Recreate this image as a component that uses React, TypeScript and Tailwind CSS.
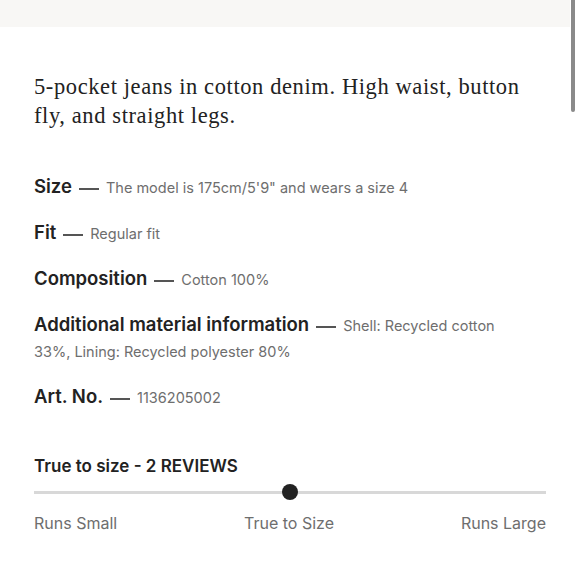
export default function App() {
  const rows: { label: string; value: string }[] = [
    { label: "Size", value: "The model is 175cm/5'9\" and wears a size 4" },
    { label: "Fit", value: "Regular fit" },
    { label: "Composition", value: "Cotton 100%" },
    { label: "Additional material information", value: "Shell: Recycled cotton 33%, Lining: Recycled polyester 80%" },
    { label: "Art. No.", value: "1136205002" },
  ];
  return (
    <div className="relative w-[580px] h-[580px] bg-white overflow-hidden">
      <div className="h-[27px] w-[570px] bg-[#f8f7f5]" />
      <div className="absolute right-[5px] top-0 w-[4px] h-[112px] bg-[#8a8a8a] rounded-b-sm" />
      <div className="px-[34px] pt-[45px]">
        <p className="font-['Liberation_Serif',serif] text-[22.5px] tracking-[0.6px] leading-[29px] text-[#222] w-[510px]">
          5-pocket jeans in cotton denim. High waist, button fly, and straight legs.
        </p>
        <div className="mt-[43px] flex flex-col gap-[18px] font-['Inter',sans-serif]">
          {rows.map((r) => (
            <p key={r.label} className="leading-[26px] text-[14.5px] text-[#6e6e6e] w-[485px]">
              <span className="text-[18.5px] font-semibold text-[#222]">{r.label}</span>
              <span className="inline-block align-middle w-[20px] h-[2px] bg-[#555] mx-[7px]" />
              {r.value}
            </p>
          ))}
        </div>
        <div className="mt-[43px] font-['Inter',sans-serif]">
          <div className="text-[17px] leading-[24px] font-semibold text-[#222]">True to size - 2 REVIEWS</div>
          <div className="relative mt-[6px] h-[16px] flex items-center">
            <div className="h-[3px] w-full bg-[#d8d8d8]" />
            <div className="absolute left-[248px] top-0 w-[16px] h-[16px] rounded-full bg-[#222]" />
          </div>
          <div className="mt-[11px] flex justify-between text-[16px] leading-[24px] text-[#6e6e6e]">
            <span>Runs Small</span>
            <span>True to Size</span>
            <span>Runs Large</span>
          </div>
        </div>
      </div>
    </div>
  );
}
